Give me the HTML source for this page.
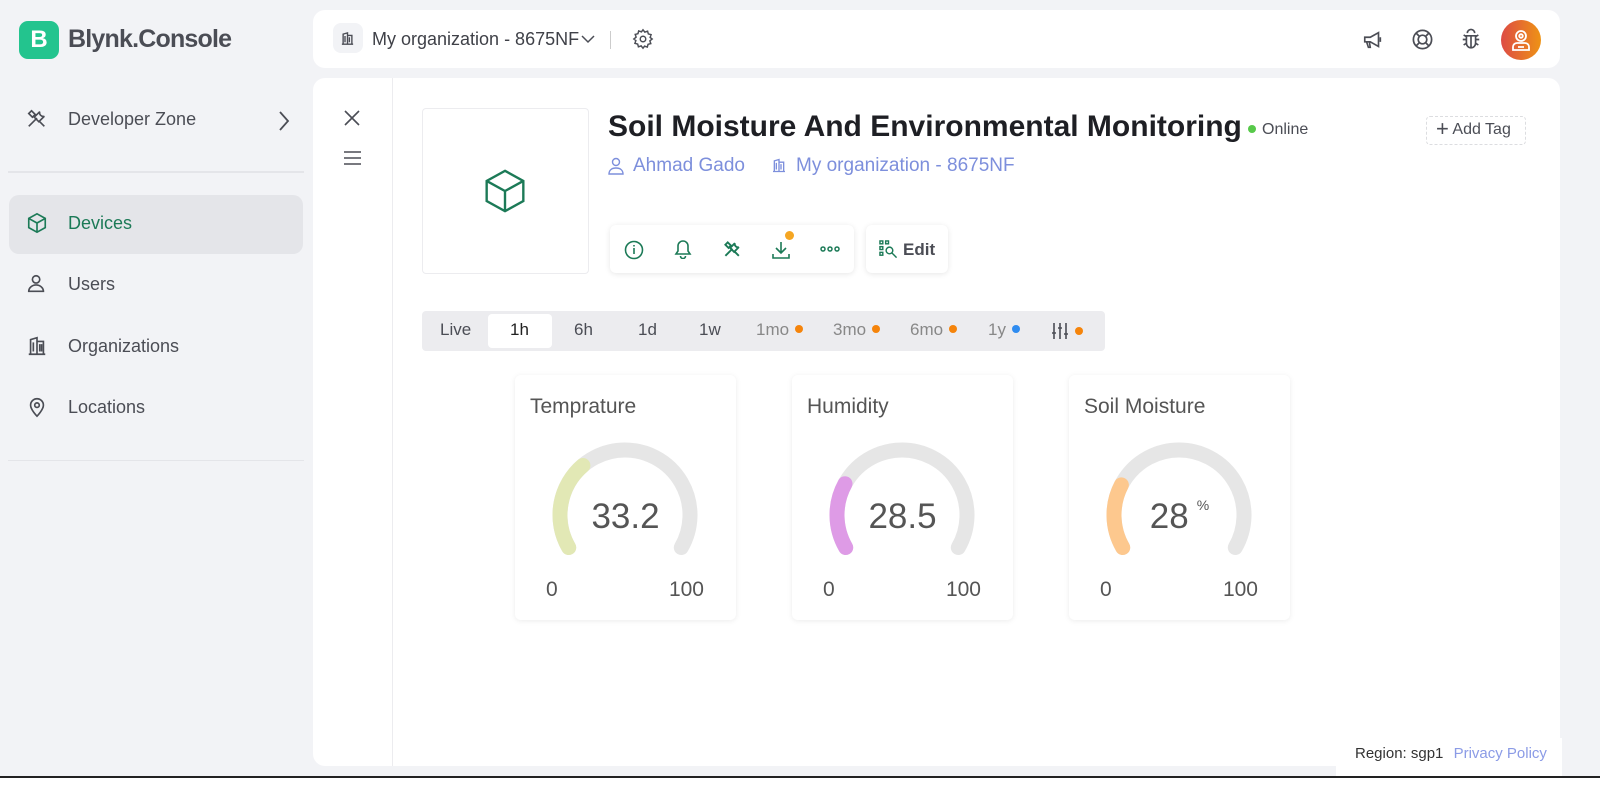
<!DOCTYPE html>
<html><head><meta charset="utf-8"><style>
*{box-sizing:border-box;margin:0;padding:0}
body{width:1600px;height:794px;background:#f2f3f6;font-family:"Liberation Sans",sans-serif;color:#4b4d55;position:relative;overflow:hidden}
.a{position:absolute}
.card{background:#fff;border-radius:12px}
.nav{position:absolute;left:26px;font-size:18px;color:#4b4d55;display:flex;align-items:center}
.nav svg{margin-right:20px}
.tab{position:absolute;top:320px;font-size:17px;color:#4b4d55}
.dot{display:inline-block;width:8px;height:8px;border-radius:50%;margin-left:6px;vertical-align:2px}
.w{position:absolute;top:375px;width:221px;height:245px;background:#fff;border-radius:6px;box-shadow:0 1px 6px rgba(0,0,0,.08)}
.w .t{position:absolute;left:15px;top:20px;font-size:21px;color:#555}
.w .v{position:absolute;left:0;width:221px;top:122px;text-align:center;font-size:35px;color:#555}
.w .mn{position:absolute;left:31px;top:203px;font-size:21px;color:#555}
.w .mx{position:absolute;right:32px;top:203px;font-size:21px;color:#555}
.w svg{position:absolute;left:0;top:0}
</style></head><body>
<div class="a" style="left:19px;top:21px;width:40px;height:38px;background:#23c48e;border-radius:9px;color:#fff;font-weight:bold;font-size:24px;text-align:center;line-height:38px">B</div>
<div class="a" style="left:68px;top:25px;font-size:25px;font-weight:bold;color:#4b4d55;letter-spacing:-0.8px">Blynk.Console</div>

<div class="nav" style="top:108px"><svg width="22" height="22" viewBox="0 0 24 24" fill="none" stroke="#4b4d55" stroke-width="1.8"><path d="M3 20l9-9M6 3l4 4-3 3-4-4zM14 14l6 6M15 4a4 4 0 0 0 5 5l-6 6-5-5z"/></svg>Developer Zone</div>
<svg class="a" style="left:276px;top:110px" width="16" height="22" viewBox="0 0 16 22" fill="none" stroke="#4b4d55" stroke-width="1.8"><path d="M4 2l8 9-8 9"/></svg>
<div class="a" style="left:8px;top:171px;width:296px;height:2px;background:#e4e5e9"></div>
<div class="a" style="left:9px;top:195px;width:294px;height:59px;background:#e4e5e9;border-radius:10px"></div>
<div class="nav" style="top:212px;color:#1c7a57"><svg width="22" height="22" viewBox="0 0 24 24" fill="none" stroke="#1c7a57" stroke-width="1.8"><path d="M12 2l9 5v10l-9 5-9-5V7zM3 7l9 5 9-5M12 12v10"/></svg>Devices</div>
<div class="nav" style="top:273px"><svg width="22" height="22" viewBox="0 0 24 24" fill="none" stroke="#4b4d55" stroke-width="1.8"><circle cx="11" cy="7" r="4"/><path d="M3 20c0-4 4-7 8-7s8 3 8 7z"/></svg>Users</div>
<div class="nav" style="top:335px"><svg width="22" height="22" viewBox="0 0 24 24" fill="none" stroke="#4b4d55" stroke-width="1.8"><path d="M3 21h18M5 21V5l7-2v18M12 7h7v14M8 8v10M15 10v8M17 10v8"/></svg>Organizations</div>
<div class="nav" style="top:396px"><svg width="22" height="22" viewBox="0 0 24 24" fill="none" stroke="#4b4d55" stroke-width="1.8"><path d="M12 22s7-7 7-12a7 7 0 0 0-14 0c0 5 7 12 7 12z"/><circle cx="12" cy="10" r="2.5"/></svg>Locations</div>
<div class="a" style="left:8px;top:460px;width:296px;height:1px;background:#e4e5e9"></div>

<div class="a card" style="left:313px;top:10px;width:1247px;height:58px"></div>
<div class="a" style="left:333px;top:23px;width:30px;height:30px;background:#f2f3f6;border-radius:8px"></div>
<svg class="a" style="left:340px;top:31px" width="15" height="15" viewBox="0 0 24 24" fill="none" stroke="#4b4d55" stroke-width="2.2"><path d="M3 21h18M5 21V5l7-2v18M12 7h7v14M8 8v10M15 10v8"/></svg>
<div class="a" style="left:372px;top:29px;font-size:18px;color:#3f4148">My organization - 8675NF</div>
<svg class="a" style="left:581px;top:34px" width="14" height="10" viewBox="0 0 14 10" fill="none" stroke="#4b4d55" stroke-width="1.5"><path d="M1 2l6 6 6-6"/></svg>
<div class="a" style="left:610px;top:31px;width:1px;height:18px;background:#ccc"></div>
<svg class="a" style="left:632px;top:28px" width="22" height="22" viewBox="0 0 24 24" fill="none" stroke="#4b4d55" stroke-width="1.6"><circle cx="12" cy="12" r="3"/><path d="M12 2l2 2.5 3-1 .8 3 3 .8-1 3L22 12l-2.5 2 1 3-3 .8-.8 3-3-1L12 22l-2-2.5-3 1-.8-3-3-.8 1-3L2 12l2.5-2-1-3 3-.8.8-3 3 1z"/></svg>
<svg class="a" style="left:1362px;top:29px" width="22" height="22" viewBox="0 0 24 24" fill="none" stroke="#4b4d55" stroke-width="1.8"><path d="M3 9h6l9-5v15l-9-5H3zM5 14l2 6h2l-1-6M20 9v5"/></svg>
<svg class="a" style="left:1411px;top:28px" width="23" height="23" viewBox="0 0 24 24" fill="none" stroke="#4b4d55" stroke-width="1.8"><circle cx="12" cy="12" r="9.5"/><circle cx="12" cy="12" r="4.5"/><path d="M5 5l4 4M19 5l-4 4M5 19l4-4M19 19l-4-4"/></svg>
<svg class="a" style="left:1460px;top:28px" width="22" height="23" viewBox="0 0 24 24" fill="none" stroke="#4b4d55" stroke-width="1.8"><path d="M8 5a4 4 0 0 1 8 0M7 8h10v8a5 5 0 0 1-10 0zM12 8v13M3 12h4M17 12h4M4 18l3-2M20 18l-3-2M4 7l3 2M20 7l-3 2"/></svg>
<div class="a" style="left:1501px;top:20px;width:40px;height:40px;border-radius:50%;background:linear-gradient(90deg,#dd4b45,#ee9315)"></div>
<svg class="a" style="left:1511px;top:29px" width="20" height="22" viewBox="0 0 20 22" fill="none" stroke="#fff" stroke-width="1.8"><circle cx="10" cy="7" r="5"/><circle cx="10" cy="7" r="1.8"/><path d="M2 21v-3a4 4 0 0 1 4-4h8a4 4 0 0 1 4 4v3zM7 18h6"/></svg>

<div class="a card" style="left:313px;top:78px;width:1247px;height:688px"></div>
<div class="a" style="left:392px;top:78px;width:1px;height:688px;background:#ececef"></div>
<svg class="a" style="left:344px;top:110px" width="16" height="16" viewBox="0 0 16 16" stroke="#4b4d55" stroke-width="1.6"><path d="M1 1l14 14M15 1L1 15"/></svg>
<svg class="a" style="left:344px;top:151px" width="17" height="14" viewBox="0 0 17 14" stroke="#4b4d55" stroke-width="1.6"><path d="M0 1h17M0 7h17M0 13h17"/></svg>

<div class="a" style="left:422px;top:108px;width:167px;height:166px;border:1px solid #ececef;border-radius:4px"></div>
<svg class="a" style="left:483px;top:168px" width="44" height="46" viewBox="0 0 24 25" fill="none" stroke="#1c7a57" stroke-width="1.3"><path d="M12 1.5l10 5.5v11l-10 5.5-10-5.5V7zM2 7l10 5.5L22 7M12 12.5v11"/></svg>

<div class="a" style="left:608px;top:110px;font-size:30px;font-weight:bold;color:#1e1f24;white-space:nowrap">Soil Moisture And Environmental Monitoring</div>
<div class="a" style="left:1248px;top:125px;width:8px;height:8px;border-radius:50%;background:#57c94a"></div>
<div class="a" style="left:1262px;top:121px;font-size:16px;color:#4b4d55">Online</div>
<div class="a" style="left:1426px;top:116px;width:100px;height:29px;border:1px dashed #dcdde0;border-radius:4px"></div>
<div class="a" style="left:1436px;top:120px;font-size:16px;color:#4b4d55"><span style="font-size:22px;line-height:18px;vertical-align:-2px">+</span> Add Tag</div>

<svg class="a" style="left:608px;top:157px" width="16" height="18" viewBox="0 0 16 18" fill="none" stroke="#7d8fdc" stroke-width="1.4"><circle cx="8" cy="5" r="3.5"/><path d="M1 17c0-4 3-6 7-6s7 2 7 6z"/></svg>
<div class="a" style="left:633px;top:155px;font-size:19px;color:#7d8fdc">Ahmad Gado</div>
<svg class="a" style="left:771px;top:157px" width="16" height="17" viewBox="0 0 24 24" fill="none" stroke="#7d8fdc" stroke-width="2"><path d="M3 21h18M5 21V5l7-2v18M12 7h7v14M8 8v10M15 10v8"/></svg>
<div class="a" style="left:796px;top:155px;font-size:19px;color:#7d8fdc">My organization - 8675NF</div>

<div class="a" style="left:610px;top:225px;width:244px;height:48px;background:#fff;border-radius:6px;box-shadow:0 1px 6px rgba(0,0,0,.1)"></div>
<svg class="a" style="left:624px;top:240px" width="20" height="20" viewBox="0 0 20 20" fill="none" stroke="#1c7a57" stroke-width="1.6"><circle cx="10" cy="10" r="8.5"/><path d="M10 8v6M10 5v1.5"/></svg>
<svg class="a" style="left:674px;top:239px" width="18" height="20" viewBox="0 0 18 20" fill="none" stroke="#1c7a57" stroke-width="1.6"><path d="M9 2a5 5 0 0 0-5 5v5l-2 3h14l-2-3V7a5 5 0 0 0-5-5zM6.5 17a2.5 2.5 0 0 0 5 0"/></svg>
<svg class="a" style="left:723px;top:240px" width="19" height="19" viewBox="0 0 24 24" fill="none" stroke="#1c7a57" stroke-width="2.4"><path d="M3 20l9-9M6 3l4 4-3 3-4-4zM14 14l6 6M15 4a4 4 0 0 0 5 5l-6 6-5-5z"/></svg>
<svg class="a" style="left:771px;top:240px" width="20" height="20" viewBox="0 0 20 20" fill="none" stroke="#1c7a57" stroke-width="1.6"><path d="M10 2v11M5 8l5 5 5-5M2 14v4h16v-4"/></svg>
<div class="a" style="left:785px;top:231px;width:9px;height:9px;border-radius:50%;background:#f5a623"></div>
<svg class="a" style="left:820px;top:245px" width="20" height="8" viewBox="0 0 20 8" fill="none" stroke="#1c7a57" stroke-width="1.5"><circle cx="3" cy="4" r="2"/><circle cx="10" cy="4" r="2"/><circle cx="17" cy="4" r="2"/></svg>
<div class="a" style="left:866px;top:225px;width:82px;height:48px;background:#fff;border-radius:6px;box-shadow:0 1px 6px rgba(0,0,0,.1)"></div>
<svg class="a" style="left:879px;top:240px" width="19" height="19" viewBox="0 0 20 20" fill="none" stroke="#1c7a57" stroke-width="1.5"><rect x="1" y="1" width="3" height="3"/><rect x="7" y="1" width="3" height="3"/><rect x="1" y="7" width="3" height="3"/><rect x="1" y="13" width="3" height="3"/><circle cx="11" cy="11" r="3.5"/><path d="M13.5 13.5l5 5"/></svg>
<div class="a" style="left:903px;top:240px;font-size:17px;font-weight:bold;color:#4b4d55">Edit</div>

<div class="a" style="left:422px;top:311px;width:683px;height:40px;background:#ececef;border-radius:4px"></div>
<div class="a" style="left:488px;top:314px;width:64px;height:34px;background:#fff;border-radius:4px"></div>
<div class="tab" style="left:440px">Live</div>
<div class="tab" style="left:510px;color:#222">1h</div>
<div class="tab" style="left:574px">6h</div>
<div class="tab" style="left:638px">1d</div>
<div class="tab" style="left:699px">1w</div>
<div class="tab" style="left:756px;color:#888">1mo<span class="dot" style="background:#f5840b"></span></div>
<div class="tab" style="left:833px;color:#888">3mo<span class="dot" style="background:#f5840b"></span></div>
<div class="tab" style="left:910px;color:#888">6mo<span class="dot" style="background:#f5840b"></span></div>
<div class="tab" style="left:988px;color:#888">1y<span class="dot" style="background:#2f8cf0"></span></div>
<svg class="a" style="left:1050px;top:321px" width="20" height="20" viewBox="0 0 20 20" fill="none" stroke="#4b4d55" stroke-width="1.6"><path d="M4 2v16M10 2v16M16 2v16M2 12h4M8 7h4M14 13h4"/></svg>
<div class="a" style="left:1075px;top:327px;width:8px;height:8px;border-radius:50%;background:#f5840b"></div>

<div class="w" style="left:515px"><div class="t">Temprature</div>
<svg width="221" height="245"><path d="M53.7 172.5 A65 65 0 1 1 166.3 172.5" fill="none" stroke="#e6e6e6" stroke-width="15" stroke-linecap="round"/><path d="M53.7 172.5 A65 65 0 1 1 166.3 172.5" pathLength="100" stroke-dasharray="33.2 200" fill="none" stroke="#e2e8b5" stroke-width="15" stroke-linecap="round"/></svg>
<div class="v">33.2</div><div class="mn">0</div><div class="mx">100</div></div>

<div class="w" style="left:792px"><div class="t">Humidity</div>
<svg width="221" height="245"><path d="M53.7 172.5 A65 65 0 1 1 166.3 172.5" fill="none" stroke="#e6e6e6" stroke-width="15" stroke-linecap="round"/><path d="M53.7 172.5 A65 65 0 1 1 166.3 172.5" pathLength="100" stroke-dasharray="24.5 200" fill="none" stroke="#de9be6" stroke-width="15" stroke-linecap="round"/></svg>
<div class="v">28.5</div><div class="mn">0</div><div class="mx">100</div></div>

<div class="w" style="left:1069px"><div class="t">Soil Moisture</div>
<svg width="221" height="245"><path d="M53.7 172.5 A65 65 0 1 1 166.3 172.5" fill="none" stroke="#e6e6e6" stroke-width="15" stroke-linecap="round"/><path d="M53.7 172.5 A65 65 0 1 1 166.3 172.5" pathLength="100" stroke-dasharray="24 200" fill="none" stroke="#fdc88e" stroke-width="15" stroke-linecap="round"/></svg>
<div class="v">28<span style="font-size:14px;vertical-align:18px;margin-left:8px">%</span></div><div class="mn">0</div><div class="mx">100</div></div>

<div class="a" style="left:1336px;top:738px;width:226px;height:38px;background:#fff"></div>
<div class="a" style="left:1355px;top:745px;font-size:15px;color:#333">Region: sgp1 <span style="color:#8b9be6;margin-left:6px">Privacy Policy</span></div>
<div class="a" style="left:0;top:776px;width:1600px;height:18px;background:#fff"></div>
<div class="a" style="left:0;top:776px;width:1600px;height:2px;background:#222"></div>
</body></html>
